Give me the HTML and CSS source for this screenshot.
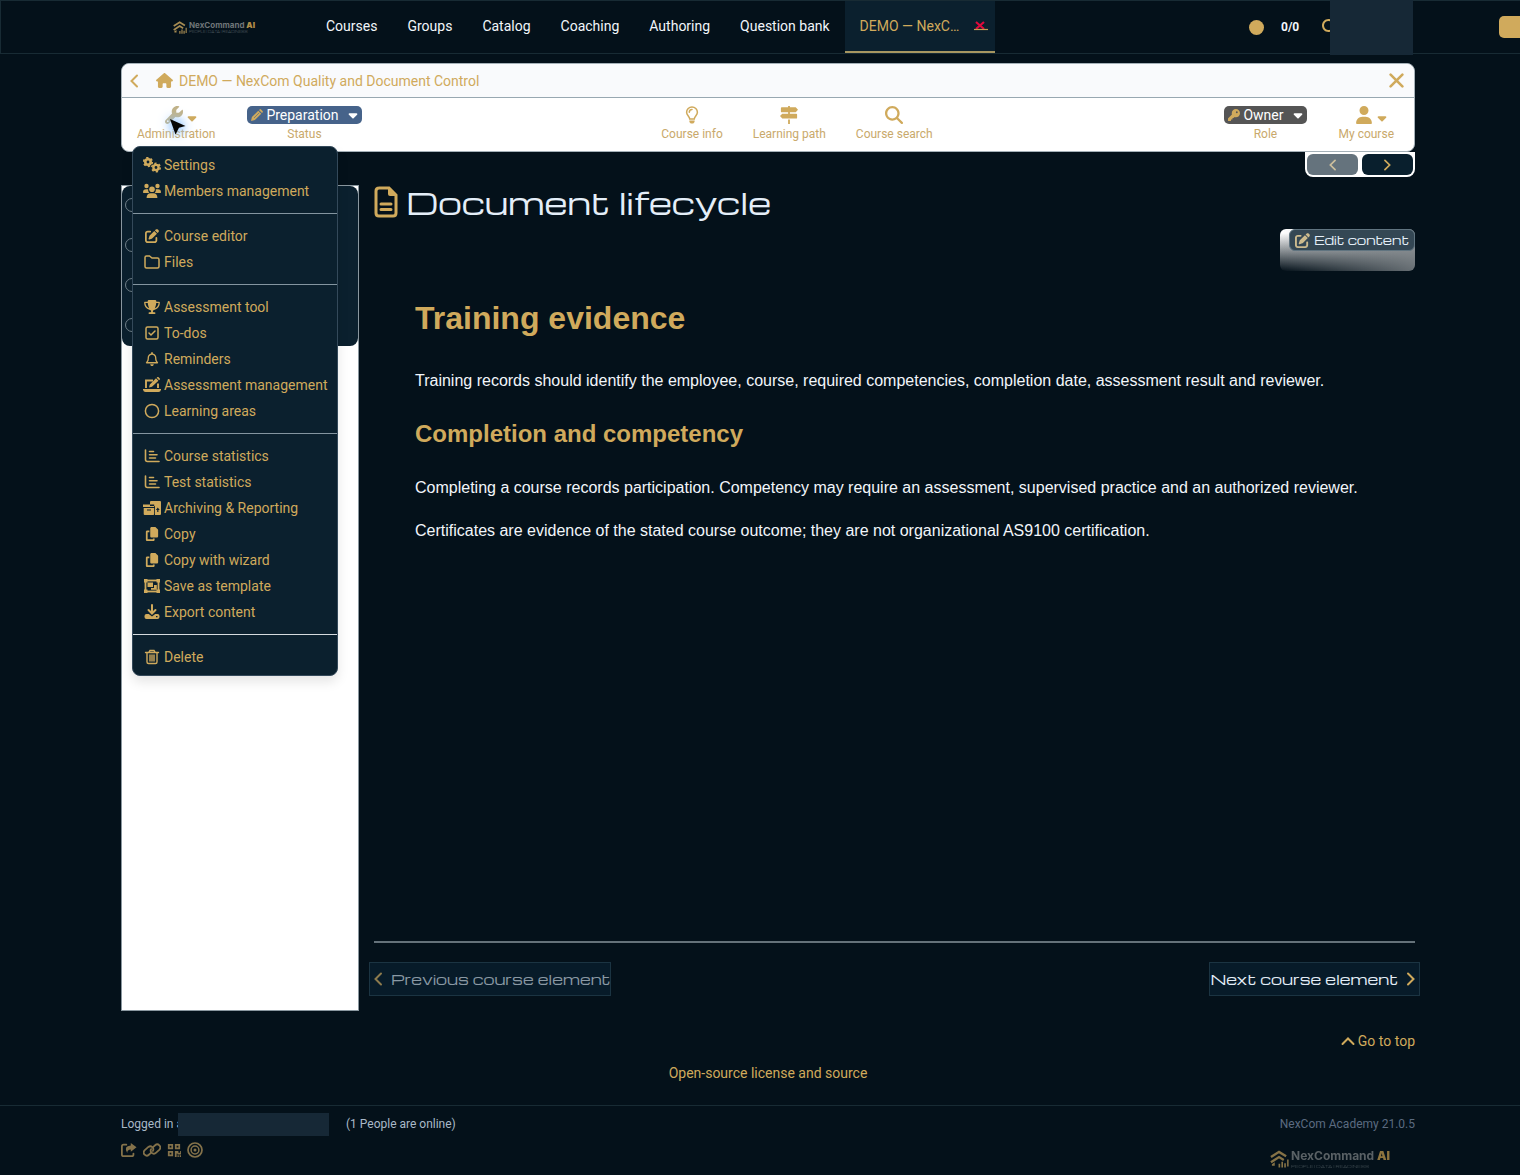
FILE: index.html
```html
<!DOCTYPE html>
<html lang="en">
<head>
<meta charset="utf-8">
<meta name="viewport" content="width=device-width, initial-scale=1">
<title>Document lifecycle</title>
<link rel="stylesheet" href="styles.css">
</head>
<body>
<svg class="sprite" aria-hidden="true">
  <symbol id="caret" viewBox="0 0 320 512"><path d="M137.4 374.6c12.5 12.5 32.800 12.5 45.300 0l128-128c9.200-9.200 11.900-22.900 6.900-34.900s-16.600-19.800-29.600-19.800L32 192c-12.900 0-24.600 7.800-29.600 19.800s-2.200 25.700 6.900 34.900z"/></symbol>
  <symbol id="user" viewBox="0 0 448 512"><path d="M224 256A128 128 0 1 0 224 0a128 128 0 1 0 0 256zm-45.700 48C79.800 304 0 383.800 0 482.300C0 498.700 13.300 512 29.700 512h388.600c16.400 0 29.700-13.300 29.700-29.700C448 383.800 368.200 304 269.700 304z"/></symbol>
  <symbol id="home" viewBox="0 0 576 512"><path d="M575.8 255.5c0 18-15 32.100-32 32.100h-32l.7 176c0 30-18 48-40 48H392c-22 0-40-18-40-40v-88c0-18-14-32-32-32h-64c-18 0-32 14-32 32v88c0 22-18 40-40 40h-80c-22 0-40-18-40-40V287.600H32c-18 0-32-14-32-32.100c0-9 3-17 10-24L266.400 8c7-7 15-8 22-8s15 2 21 7L564.800 231.500c8 7 12 15 11 24z"/></symbol>
  <symbol id="edit" viewBox="0 0 512 512"><path d="M471.600 21.700c-21.900-21.900-57.300-21.900-79.200 0L362.300 51.700l97.900 97.900 30.100-30.100c21.900-21.900 21.900-57.300 0-79.200zM172.400 241.700c-6.100 6.100-10.800 13.600-13.500 21.900l-29.600 88.800c-2.900 8.600-.6 18.100 5.800 24.600s15.900 8.700 24.600 5.800l88.800-29.600c8.200-2.700 15.700-7.400 21.900-13.500L437.700 172.300 339.700 74.300zM96 64C43 64 0 107 0 160V416c0 53 43 96 96 96h256c53 0 96-43 96-96v-96c0-17.700-14.300-32-32-32s-32 14.300-32 32v96c0 17.700-14.300 32-32 32H96c-17.700 0-32-14.300-32-32V160c0-17.700 14.300-32 32-32h96c17.700 0 32-14.300 32-32s-14.300-32-32-32z"/></symbol>
  <symbol id="search" viewBox="0 0 512 512"><path d="M416 208c0 45.900-14.900 88.300-40 122.700L502.600 457.400c12.500 12.500 12.500 32.800 0 45.300s-32.800 12.500-45.300 0L330.700 376c-34.400 25.200-76.800 40-122.700 40C93.100 416 0 322.900 0 208S93.100 0 208 0S416 93.100 416 208zM208 352a144 144 0 1 0 0-288 144 144 0 1 0 0 288z"/></symbol>
  <symbol id="bell" viewBox="0 0 448 512"><path d="M224 0c-17.700 0-32 14.300-32 32v19.200C119 66 64 130.600 64 208v25.400c0 45.400-15.500 89.500-43.800 124.900L5.300 377c-5.800 7.200-6.900 17.100-2.900 25.400S14.800 416 24 416h400c9.200 0 17.600-5.300 21.600-13.600s2.900-18.200-2.900-25.400l-14.900-18.600C399.500 322.900 384 278.800 384 233.400V208c0-77.400-55-142-128-156.800V32c0-17.700-14.300-32-32-32zm0 96c61.900 0 112 50.100 112 112v25.400c0 47.900 13.900 94.600 39.700 134.600H72.300C98.100 328 112 281.300 112 233.400V208c0-61.900 50.100-112 112-112zm64 352H160c0 17 6.700 33.300 18.700 45.300s28.300 18.700 45.300 18.700 33.300-6.700 45.300-18.700 18.700-28.300 18.700-45.300z"/></symbol>
  <symbol id="wrench" viewBox="0 0 512 512"><path d="M352 320c88.400 0 160-71.600 160-160c0-15.300-2.200-30.100-6.200-44.200c-3.100-10.800-16.400-13.200-24.300-5.300l-76.800 76.800c-3 3-7.100 4.700-11.300 4.700H336c-8.800 0-16-7.200-16-16v-57.400c0-4.200 1.700-8.300 4.700-11.300l76.800-76.800c7.900-7.900 5.400-21.200-5.300-24.300C382.100 2.200 367.300 0 352 0C263.600 0 192 71.600 192 160c0 19.100 3.400 37.500 9.500 54.500L19.900 396.100C7.200 408.800 0 426.100 0 444.100C0 481.600 30.400 512 67.900 512c18 0 35.300-7.200 48-19.900L297.500 310.500c17 6.200 35.400 9.500 54.500 9.500zM80 408a24 24 0 1 1 0 48 24 24 0 1 1 0-48z"/></symbol>
  <symbol id="key" viewBox="0 0 512 512"><path d="M336 352c97.200 0 176-78.800 176-176S433.200 0 336 0S160 78.800 160 176c0 18.700 2.900 36.800 8.300 53.700L7 391c-4.500 4.500-7 10.600-7 17v80c0 13.300 10.700 24 24 24h80c13.300 0 24-10.700 24-24v-40h40c13.300 0 24-10.700 24-24v-40h40c6.400 0 12.500-2.500 17-7l33.300-33.300c16.900 5.400 35 8.300 53.700 8.300zM376 96a40 40 0 1 1 0 80 40 40 0 1 1 0-80z"/></symbol>
  <symbol id="trophy" viewBox="0 0 576 512"><path d="M400 0H176c-26.500 0-48.100 21.800-47.100 48.200c.2 5.300 .4 10.600 .7 15.800H24C10.700 64 0 74.700 0 88c0 92.600 33.500 157 78.500 200.700c44.300 43.100 98.300 64.800 138.100 75.800c23.400 6.500 39.400 26 39.400 45.600c0 20.900-17 37.900-37.900 37.900H192c-17.700 0-32 14.300-32 32s14.300 32 32 32h192c17.700 0 32-14.300 32-32s-14.300-32-32-32h-26.100C337 448 320 431 320 410.100c0-19.600 15.900-39.200 39.400-45.600c39.900-11 93.900-32.700 138.200-75.800C542.500 245 576 180.600 576 88c0-13.300-10.700-24-24-24H446.400c.3-5.200 .5-10.400 .7-15.800C448.100 21.800 426.500 0 400 0zM48.900 112h84.400c9.100 90.100 29.200 150.300 51.900 190.600c-24.900-11-50.800-26.500-73.200-48.300c-32-31.100-58-76-63-142.300zM464.100 254.300c-22.400 21.800-48.300 37.300-73.200 48.300c22.700-40.300 42.800-100.500 51.900-190.600h84.400c-5.100 66.300-31.100 111.200-63 142.300z"/></symbol>
  <symbol id="copy" viewBox="0 0 448 512"><path d="M208 0h124c13 0 25 5 34 14l68 68c9 9 14 21 14 34v220c0 26-22 48-48 48H208c-26 0-48-22-48-48V48c0-26 22-48 48-48zM48 128h80v64H64v256h192v-32h64v48c0 26-22 48-48 48H48c-26 0-48-22-48-48V176c0-26 22-48 48-48z"/></symbol>
  <symbol id="pencil" viewBox="0 0 16 16"><path d="M0 16l1.200-5.200L9.700 2.300l4 4L5.200 14.800zM10.600 1.400L11.500.6q1-.9 2 0l1.900 1.900q.9 1 0 2l-.8.900z"/><path d="M4 12L11 5" stroke="#46638a" stroke-width=".8"/></symbol>
  <symbol id="gears" viewBox="0 0 18 16"><circle cx="5" cy="5" r="2.700" fill="none" stroke="currentColor" stroke-width="2.600"/><circle cx="5" cy="5" r="4.300" fill="none" stroke="currentColor" stroke-width="1.700" stroke-dasharray="2.250"/><circle cx="13" cy="10.500" r="2.600" fill="none" stroke="currentColor" stroke-width="2.400"/><circle cx="13" cy="10.500" r="4.200" fill="none" stroke="currentColor" stroke-width="1.600" stroke-dasharray="2.200"/></symbol>
  <symbol id="users" viewBox="0 0 18 16"><circle cx="3.500" cy="3" r="2.200"/><circle cx="14.500" cy="3" r="2.200"/><circle cx="9" cy="6.200" r="2.800"/><path d="M0 9.500Q0 6.200 3 6.200h2.200q-.5 2.300 1 3.800H.5zM18 9.500q0-3.300-3-3.300h-2.200q.5 2.300-1 3.800h5.700zM3.600 15q0-4.800 4-4.800h2.800q4 0 4 4.800z"/></symbol>
  <symbol id="folder" viewBox="0 0 16 16"><path d="M1 3.500Q1 2 2.500 2h3L8 4h5.500Q15 4 15 5.500v7q0 1.500-1.500 1.500h-11Q1 14 1 12.500z" fill="none" stroke="currentColor" stroke-width="1.500"/></symbol>
  <symbol id="todo" viewBox="0 0 16 16"><rect x="2" y="2" width="12" height="12" rx="1.500" fill="none" stroke="currentColor" stroke-width="1.500"/><path d="M5 8l2 2 4-4" fill="none" stroke="currentColor" stroke-width="1.500" stroke-linecap="round"/></symbol>
  <symbol id="laptop" viewBox="0 0 18 16"><path d="M3 11V3.500h7M15 6.500V11" fill="none" stroke="currentColor" stroke-width="1.900"/><path d="M0 12h18v.7Q17.500 15 15.500 15h-13Q.5 15 0 12.700zM6 10.500l.8-3L13 1.300l2.400 2.400L9 9.700zM13.700.7l.7-.7q.6-.3 1.200.2l1.200 1.200q.6.600 0 1.200l-.7.700z"/></symbol>
  <symbol id="circle" viewBox="0 0 16 16"><circle cx="8" cy="8" r="6.600" fill="none" stroke="currentColor" stroke-width="1.500"/></symbol>
  <symbol id="chart" viewBox="0 0 16 16"><path d="M1.500 2v9.500q0 2 2 2H15M5.500 3.500h4M5.500 6.800h7.500M5.500 10h6" fill="none" stroke="currentColor" stroke-width="1.600" stroke-linecap="round"/></symbol>
  <symbol id="archive" viewBox="0 0 18 16"><path fill-rule="evenodd" d="M8 1h9q1 0 1 1v12q0 1-1 1h-5V6H7V2q0-1 1-1zM14.800 7.500L12.900 10h1.300v2h1.200v-2h1.300zM0 4.500h11.200V7H0zM.7 8h10.500v6q0 1-1 1H1.700q-1 0-1-1zM4 9.500v1h4v-1z"/></symbol>
  <symbol id="template" viewBox="0 0 18 16"><rect x="2.500" y="2.500" width="13" height="11" fill="none" stroke="currentColor" stroke-width="1.800"/><path d="M1 1h3.500v3.500H1zM13.500 1H17v3.500h-3.500zM1 11.500h3.500V15H1zM13.500 11.500H17V15h-3.500zM4.500 4.500h5.500v4.500H4.500zM11 7h2.800v4.700H8V10h3z"/></symbol>
  <symbol id="download" viewBox="0 0 16 16"><path d="M8 1v8M4.500 6L8 9.500 11.500 6" fill="none" stroke="currentColor" stroke-width="2" stroke-linecap="round"/><path fill-rule="evenodd" d="M2.500 10h2.300L8 12.500 11.200 10h2.300q2 0 2 2v1q0 2-2 2h-11q-2 0-2-2v-1q0-2 2-2zM12 12v1.200h1.500V12z"/></symbol>
  <symbol id="trash" viewBox="0 0 16 16"><path d="M1.500 3.500h13M5 3.200L6 1.500h4l1 1.700M3 3.800V13q0 1.500 1.500 1.500h7Q13 14.500 13 13V3.800M6 6v6M8 6v6M10 6v6" fill="none" stroke="currentColor" stroke-width="1.400" stroke-linecap="round"/></symbol>
  <symbol id="bulb" viewBox="0 0 16 20"><path d="M5.500 14.500C5.500 11.500 2 10.500 2 7a6 6 0 0 1 12 0c0 3.500-3.500 4.500-3.500 7.500zM5 7q0-3 3-3" fill="none" stroke="currentColor" stroke-width="1.700" stroke-linecap="round"/><path d="M5 16h6q0 3.500-3 3.500T5 16z"/></symbol>
  <symbol id="signs" viewBox="0 0 20 20"><path d="M9 0h2v1.500h6.500L20 4.200 17.500 7H2Q1 7 1 6V2.500q0-1 1-1h7zM9 7h2v1.500h7q1 0 1 1V13q0 1-1 1H2.500L0 11.200l2.500-2.700H9zM9 15h2v5H9z"/></symbol>
  <symbol id="doc" viewBox="0 0 24 32"><path d="M4.500 2H15l7 7v18q0 3-3 3H5q-3 0-3-3V5q0-3 3-3zM7 18h10M7 23.500h10" fill="none" stroke="currentColor" stroke-width="3" stroke-linecap="round"/><path d="M14 1l9 9h-7q-2 0-2-2z"/></symbol>
  <symbol id="left" viewBox="0 0 10 14"><path d="M8 1.500L2.500 7 8 12.500" fill="none" stroke="currentColor" stroke-width="2" stroke-linecap="round"/></symbol>
  <symbol id="right" viewBox="0 0 10 14"><path d="M2 1.500L7.500 7 2 12.500" fill="none" stroke="currentColor" stroke-width="2" stroke-linecap="round"/></symbol>
  <symbol id="up" viewBox="0 0 14 10"><path d="M1.500 8L7 2.500 12.500 8" fill="none" stroke="currentColor" stroke-width="2" stroke-linecap="round"/></symbol>
  <symbol id="cross" viewBox="0 0 14 14"><path d="M1.500 1.500l11 11M12.500 1.500l-11 11" fill="none" stroke="currentColor" stroke-width="2.400" stroke-linecap="round"/></symbol>
  <symbol id="share" viewBox="0 0 18 16"><path d="M6 2H3Q1 2 1 4v9q0 2 2 2h9q2 0 2-2v-1" fill="none" stroke="currentColor" stroke-width="2" stroke-linecap="round"/><path d="M11 0l6.500 5L11 10V7.300q-4 0-4 4.200Q2.500 3.500 11 3z"/></symbol>
  <symbol id="link" viewBox="0 0 20 16"><path d="M8.500 11.500L6.500 13.300a3.400 3.400 0 0 1-4.800-4.800L6 4.600a3.400 3.400 0 0 1 5 4.400M11.500 4.500l2-1.800a3.400 3.400 0 0 1 4.800 4.800L14 11.400A3.400 3.400 0 0 1 9 7" fill="none" stroke="currentColor" stroke-width="2" stroke-linecap="round"/></symbol>
  <symbol id="qr" viewBox="0 0 16 16"><path d="M2 2h4v4H2zM10 2h4v4h-4zM2 10h4v4H2z" fill="none" stroke="currentColor" stroke-width="2"/><path d="M9 9h4v2h2V9h1v4h-4v-1h-1v4H9zM12 14h1.500v2H12zM14.500 14H16v2h-1.500z"/></symbol>
  <symbol id="target" viewBox="0 0 16 16"><circle cx="8" cy="8" r="7" fill="none" stroke="currentColor" stroke-width="1.700"/><circle cx="8" cy="8" r="3.900" fill="none" stroke="currentColor" stroke-width="1.500"/><circle cx="8" cy="8" r="1.500"/></symbol>
  <symbol id="brand" viewBox="0 0 20 18"><path d="M1 7L9.500 1.500 17 6M1 12.500L9.500 7l5 3" fill="none" stroke="currentColor" stroke-width="2.500"/><path d="M9 14h1.700v4H9zM12 12h1.700v6H12zM15 13.500h1.700V18H15zM18 9.500h1.600V17H18zM2 14.500l3-2v3.500H2z"/></symbol>
</svg>

<header class="topbar">
  <a class="brand brand-top" href="#"><svg class="brand-mark"><use href="#brand"/></svg><span class="brand-text"><span class="brand-name">NexCommand <b>AI</b></span><span class="brand-tag">PEOPLE | DATA | READINESS</span></span></a>
  <nav class="sites">
    <a href="#">Courses</a><a href="#">Groups</a><a href="#">Catalog</a><a href="#">Coaching</a><a href="#">Authoring</a><a href="#">Question bank</a>
    <span class="tab"><a href="#">DEMO — NexC…</a><button class="tab-close" aria-label="Close tab"><svg viewBox="0 0 14 10"><path d="M2 1l8 7M10 1L2 8" stroke="#e0093c" stroke-width="2.200"/><path d="M0 8.500h14" stroke="#c49b50" stroke-width="1.200"/></svg></button></span>
  </nav>
  <div class="tools">
    <span class="dot"></span><span class="count">0/0</span>
    <button class="find" aria-label="Search"><svg><use href="#search"/></svg></button>
    <span class="mask"></span>
    <button class="edge" aria-label="More"></button>
  </div>
</header>

<div class="page">
  <section class="toolbox">
    <div class="crumbs">
      <a href="#" aria-label="Back"><svg class="i-chev"><use href="#left"/></svg></a>
      <a class="crumb" href="#"><svg class="i-home"><use href="#home"/></svg>DEMO — NexCom Quality and Document Control</a>
      <a class="close" href="#" aria-label="Close"><svg class="i-close"><use href="#cross"/></svg></a>
    </div>
    <div class="toolbar">
      <div class="group">
        <div class="admin">
          <button class="tool"><span class="tool-icon with-caret"><svg class="i20 faded"><use href="#wrench"/></svg><svg class="i-caret"><use href="#caret"/></svg></span>Administration</button>
          <ul class="menu">
            <li><a href="#"><svg><use href="#gears"/></svg>Settings</a></li>
            <li><a href="#"><svg><use href="#users"/></svg>Members management</a></li>
            <li class="rule"></li>
            <li><a href="#"><svg class="s"><use href="#edit"/></svg>Course editor</a></li>
            <li><a href="#"><svg><use href="#folder"/></svg>Files</a></li>
            <li class="rule"></li>
            <li><a href="#"><svg class="s"><use href="#trophy"/></svg>Assessment tool</a></li>
            <li><a href="#"><svg><use href="#todo"/></svg>To-dos</a></li>
            <li><a href="#"><svg class="s"><use href="#bell"/></svg>Reminders</a></li>
            <li><a href="#"><svg><use href="#laptop"/></svg>Assessment management</a></li>
            <li><a href="#"><svg><use href="#circle"/></svg>Learning areas</a></li>
            <li class="rule"></li>
            <li><a href="#"><svg><use href="#chart"/></svg>Course statistics</a></li>
            <li><a href="#"><svg><use href="#chart"/></svg>Test statistics</a></li>
            <li><a href="#"><svg><use href="#archive"/></svg>Archiving &amp; Reporting</a></li>
            <li><a href="#"><svg class="s"><use href="#copy"/></svg>Copy</a></li>
            <li><a href="#"><svg class="s"><use href="#copy"/></svg>Copy with wizard</a></li>
            <li><a href="#"><svg><use href="#template"/></svg>Save as template</a></li>
            <li><a href="#"><svg><use href="#download"/></svg>Export content</a></li>
            <li class="rule strong"></li>
            <li><a href="#"><svg><use href="#trash"/></svg>Delete</a></li>
          </ul>
          <svg class="pointer" viewBox="0 0 16 16"><path d="M0 0l15.500 7-6.500 1.800L5.500 15.500z"/></svg>
        </div>
        <div class="tool"><button class="pill status"><svg class="i-pill"><use href="#pencil"/></svg>Preparation<svg class="i-caret"><use href="#caret"/></svg></button>Status</div>
      </div>
      <div class="group middle">
        <button class="tool"><span class="tool-icon"><svg class="i20"><use href="#bulb"/></svg></span>Course info</button>
        <button class="tool"><span class="tool-icon"><svg class="i20"><use href="#signs"/></svg></span>Learning path</button>
        <button class="tool"><span class="tool-icon"><svg class="i20"><use href="#search"/></svg></span>Course search</button>
      </div>
      <div class="group">
        <div class="tool"><button class="pill role"><svg class="i-pill"><use href="#key"/></svg>Owner<svg class="i-caret"><use href="#caret"/></svg></button>Role</div>
        <button class="tool"><span class="tool-icon with-caret"><svg class="i20"><use href="#user"/></svg><svg class="i-caret"><use href="#caret"/></svg></span>My course</button>
      </div>
    </div>
  </section>
  <div class="pager">
    <button class="off" aria-label="Previous" disabled><svg><use href="#left"/></svg></button>
    <button aria-label="Next"><svg><use href="#right"/></svg></button>
  </div>

  <div class="columns">
    <aside class="tree"><ul><li></li><li></li><li></li><li></li></ul></aside>
    <main class="main">
      <h1 class="title"><svg><use href="#doc"/></svg>Document lifecycle</h1>
      <div class="edit-row"><div class="edit-box"><button class="edit"><svg><use href="#edit"/></svg>Edit content</button></div></div>
      <article class="content">
        <h2>Training evidence</h2>
        <p>Training records should identify the employee, course, required competencies, completion date, assessment result and reviewer.</p>
        <h3>Completion and competency</h3>
        <p>Completing a course records participation. Competency may require an assessment, supervised practice and an authorized reviewer.</p>
        <p>Certificates are evidence of the stated course outcome; they are not organizational AS9100 certification.</p>
      </article>
      <div class="steps">
        <button class="step prev" disabled><svg><use href="#left"/></svg>Previous course element</button>
        <button class="step next">Next course element<svg><use href="#right"/></svg></button>
      </div>
    </main>
  </div>
  <div class="to-top"><a href="#"><svg><use href="#up"/></svg>Go to top</a></div>
</div>
<div class="license"><a href="#">Open-source license and source</a></div>

<footer class="footer">
  <div class="foot-left">
    <div class="logged"><span>Logged in a</span><span class="user-mask"></span><span>(1 People are online)</span></div>
    <div class="foot-icons">
      <a href="#" aria-label="Share"><svg><use href="#share"/></svg></a>
      <a href="#" aria-label="Link"><svg class="wide"><use href="#link"/></svg></a>
      <a href="#" aria-label="QR code"><svg class="small"><use href="#qr"/></svg></a>
      <a href="#" aria-label="Focus"><svg><use href="#target"/></svg></a>
    </div>
  </div>
  <div class="foot-right">
    <span class="version">NexCom Academy 21.0.5</span>
    <a class="brand brand-foot" href="#"><svg class="brand-mark"><use href="#brand"/></svg><span class="brand-text"><span class="brand-name">NexCommand <b>AI</b></span><span class="brand-tag">PEOPLE | DATA | READINESS</span></span></a>
  </div>
</footer>
</body>
</html>
```
FILE: styles.css
```css
:root {
  --bg: #04111a;
  --panel: #0b202e;
  --gold: #d0aa5c;
  --line: #182b34;
  --wide: Michroma, "Eurostile Extended", "DejaVu Sans", sans-serif;
}
* { box-sizing: border-box; }
body {
  margin: 0;
  background: var(--bg);
  color: #f2f6fa;
  font: 14px/20px Roboto, "Liberation Sans", sans-serif;
  overflow-x: hidden;
}
a { color: var(--gold); text-decoration: none; }
button { font: inherit; color: inherit; background: none; border: 0; padding: 0; }
svg { fill: currentColor; display: block; flex: none; }
ul { list-style: none; margin: 0; padding: 0; }
.sprite { display: none; }

/* top bar */
.topbar {
  display: flex;
  height: 54px;
  border: 1px solid var(--line);
  border-right: 0;
  padding-left: 172px;
}
.brand { display: flex; align-items: center; gap: 2px; color: #a68b52; }
.brand-text { display: flex; flex-direction: column; font-weight: 700; font-family: Inter, sans-serif; }
.brand-name { color: #6f7578; white-space: nowrap; }
.brand-name b { color: #b08d48; font-weight: 900; }
.brand-tag { color: #4a565c; font-family: var(--wide); font-weight: 400; white-space: nowrap; }
.brand-top { width: 138px; align-self: center; }
.brand-top .brand-mark { width: 14px; height: 13px; }
.brand-top .brand-name { font-size: 8px; line-height: 10px; }
.brand-top .brand-tag { font-size: 3px; line-height: 4px; }
.sites { display: flex; flex: 1; }
.sites > a { padding: 15px; color: #f2f6fa; line-height: 20px; }
.tab {
  display: flex;
  align-items: center;
  width: 150px;
  padding: 0 7px 0 15px;
  background: var(--panel);
  border-bottom: 2px solid #a79660;
  justify-content: space-between;
}
.tab-close svg { width: 14px; height: 10px; }
.tools { display: flex; align-items: center; }
.dot { width: 15px; height: 15px; border-radius: 50%; background: var(--gold); margin-right: 17px; }
.count { font-size: 12px; font-weight: 700; width: 41px; }
.find { width: 8px; overflow: hidden; color: var(--gold); }
.find svg { width: 16px; height: 16px; }
.mask { width: 83px; height: 56px; background: #162836; margin-right: 86px; }
.edge { width: 21px; height: 22px; background: var(--gold); border-radius: 5px 0 0 5px; }

.page { padding: 9px 105px 0 121px; }

/* course toolbox */
.toolbox { background: #fff; border: 1px solid #a5b1b8; border-radius: 8px; color: var(--gold); }
.crumbs {
  display: flex;
  align-items: center;
  height: 34px;
  padding: 0 10px 0 7px;
  background: #f9fafc;
  border-bottom: 1px solid #98a8b1;
  border-radius: 8px 8px 0 0;
}
.crumb { display: flex; align-items: center; gap: 6px; margin-left: 17px; }
.i-chev { width: 10px; height: 14px; }
.i-home { width: 17px; height: 15px; }
.close { margin-left: auto; }
.i-close { width: 15px; height: 15px; }
.toolbar { display: flex; justify-content: space-between; height: 53px; padding: 7px 20px 0 15px; }
.group { display: flex; gap: 32px; align-items: flex-start; }
.middle { gap: 30px; padding-left: 8px; }
.admin { position: relative; }
.tool { display: flex; flex-direction: column; align-items: center; font-size: 12px; line-height: 18px; color: #c9a96b; }
.tool-icon { display: flex; align-items: center; gap: 4px; height: 20px; color: var(--gold); }
.tool-icon .i-caret { margin-top: 6px; }
.with-caret { padding-left: 10px; }
.i20 { width: 18px; height: 18px; }
.faded { color: #c1b287; }
.i-caret { width: 10px; height: 14px; }
.pill { display: flex; align-items: center; gap: 3px; height: 18px; margin: 1px 0; padding: 0 4px; border-radius: 5px; color: #fff; font-size: 14px; }
.pill .i-caret { margin-left: 6px; }
.status { background: #46638a; }
.role { background: #555; }
.i-pill { width: 12px; height: 12px; color: var(--gold); }
.menu {
  position: absolute;
  z-index: 2;
  left: -5px;
  top: 41px;
  width: 206px;
  padding: 5px 0;
  background: var(--panel);
  border: 1px solid #34495a;
  border-radius: 8px;
  box-shadow: 0 6px 12px rgba(0, 0, 0, .1);
}
.menu a { display: flex; align-items: center; gap: 3px; height: 26px; padding-left: 10px; font-size: 14px; line-height: 20px; white-space: nowrap; }
.menu svg { width: 18px; height: 16px; }
.menu svg.s { height: 14px; }
.rule { height: 1px; margin: 9px 0; background: #8495a0; }
.rule.strong { background: #d5dade; }
.pointer { position: absolute; z-index: 3; left: 33px; top: 14px; width: 16px; height: 16px; fill: #050505; filter: drop-shadow(0 0 5px #6fb4ff) drop-shadow(0 0 6px #a9d1ff); }

.pager { display: flex; gap: 4px; width: 110px; height: 25px; margin-left: auto; padding: 2px; background: #fff; border-radius: 0 0 8px 8px; }
.pager button { flex: 1; display: grid; place-items: center; height: 21px; background: #091f2d; border-radius: 6px; color: var(--gold); }
.pager .off { background: #65737d; color: #cdbf9d; }
.pager svg { width: 9px; height: 12px; }

/* content columns */
.columns { display: grid; grid-template-columns: 238px 1fr; gap: 15px; margin-top: 8px; }
.tree { background: #fff; border: 1px solid #8a979f; }
.tree ul { height: 160px; background: var(--panel); border-radius: 8px; padding: 12px 0 0 3px; overflow: hidden; }
.tree li { position: relative; width: 14px; height: 14px; margin-bottom: 26px; border: 1px solid #70808a; border-radius: 50%; }
.tree li:not(:last-child)::after { content: ""; position: absolute; left: 6px; top: 13px; height: 26px; border-left: 1px solid #70808a; }
.main { display: flex; flex-direction: column; }
.title { display: flex; align-items: center; gap: 8px; margin: 0; font: 400 30px/34px var(--wide); color: #e4eef8; }
.title svg { width: 24px; height: 32px; color: var(--gold); }
.edit-row { display: flex; justify-content: flex-end; margin-top: 10px; }
.edit-box { height: 42px; padding-left: 9px; border-radius: 6px; background: linear-gradient(to right, rgba(128, 134, 138, 0), rgba(128, 134, 138, .8)), linear-gradient(#fff 10%, #04111a); }
.edit { display: flex; align-items: center; gap: 4px; height: 22px; padding: 0 5px; background: #344754; border: 1px solid #607480; border-radius: 6px; font: 400 12px/20px var(--wide); color: #e4eef8; }
.edit svg { width: 15px; height: 15px; color: #cdbb8e; }
.content { min-height: 672px; padding: 27px 41px 0; font: 16px/27px "Liberation Sans", Arial, sans-serif; border-bottom: 2px solid #65727a; }
.content h2 { margin: 0 0 29px; font-size: 32px; line-height: 40px; color: var(--gold); }
.content h3 { margin: 24px 0 24px; font-size: 24px; line-height: 32px; color: var(--gold); }
.content p { margin: 0 0 16px; }
.steps { display: flex; justify-content: space-between; margin: 19px -5px 15px; }
.step { display: flex; align-items: center; height: 34px; gap: 8px; background: #071b29; border: 1px solid #1b3442; font: 400 14px/20px var(--wide); color: #e4eef8; white-space: nowrap; }
.step svg { width: 10px; height: 14px; color: var(--gold); }
.prev { color: #8a99a4; padding-left: 3px; }
.prev svg { color: #8c7a4d; }
.next { padding-right: 3px; }
.to-top { display: flex; justify-content: flex-end; margin-top: 20px; }
.to-top a { display: flex; align-items: center; gap: 3px; }
.to-top svg { width: 14px; height: 10px; }
.license { padding: 12px 0 22px; text-align: center; margin-left: 16px; }

/* footer */
.footer { display: flex; justify-content: space-between; height: 70px; padding: 7px 105px 0 121px; border-top: 1px solid var(--line); font-size: 12px; color: #a9b9c8; }
.logged { display: flex; align-items: center; height: 22px; white-space: nowrap; }
.user-mask { position: relative; width: 151px; height: 23px; margin: 0 17px 0 -5px; background: #162836; }
.foot-icons { display: flex; align-items: center; gap: 6px; height: 30px; }
.foot-icons a { color: #84724a; }
.foot-icons svg { width: 16px; height: 16px; }
.foot-icons svg.wide { width: 18px; }
.foot-icons svg.small { width: 14px; height: 14px; }
.foot-right { display: flex; flex-direction: column; align-items: flex-end; }
.version { line-height: 22px; color: #5b6b80; }
.brand-foot { width: 145px; margin-top: 14px; opacity: .8; }
.brand-foot .brand-mark { width: 19px; height: 18px; }
.brand-foot .brand-name { font-size: 12px; line-height: 14px; }
.brand-foot .brand-tag { font-size: 4px; line-height: 6px; }
```
